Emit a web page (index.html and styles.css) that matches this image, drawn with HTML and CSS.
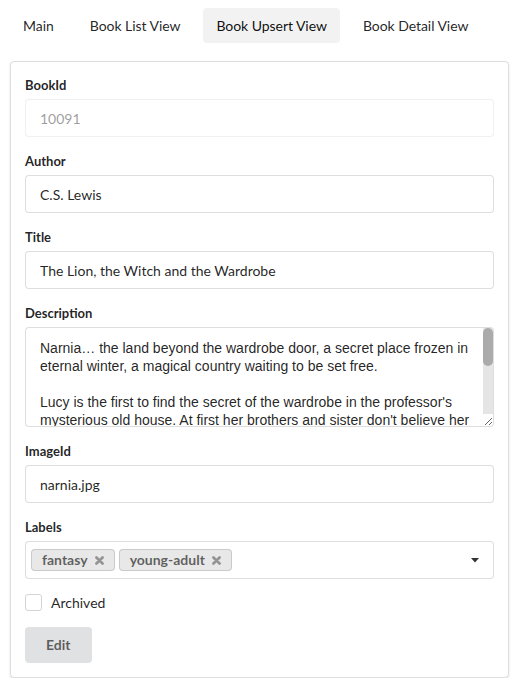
FILE: index.html
```html
<!DOCTYPE html>
<html lang="en">
<head>
<meta charset="utf-8">
<title>Book Upsert View</title>
<link rel="stylesheet" href="styles.css">
</head>
<body>
<div class="page">
  <nav class="menu">
    <a class="item">Main</a>
    <a class="item">Book List View</a>
    <a class="item active">Book Upsert View</a>
    <a class="item">Book Detail View</a>
  </nav>
  <form class="card">
    <div class="field">
      <label>BookId</label>
      <input class="input" type="text" value="10091" disabled>
    </div>
    <div class="field">
      <label>Author</label>
      <input class="input" type="text" value="C.S. Lewis">
    </div>
    <div class="field">
      <label>Title</label>
      <input class="input" type="text" value="The Lion, the Witch and the Wardrobe">
    </div>
    <div class="field">
      <label>Description</label>
      <div class="textarea-wrap">
        <textarea class="textarea">Narnia… the land beyond the wardrobe door, a secret place frozen in eternal winter, a magical country waiting to be set free.

Lucy is the first to find the secret of the wardrobe in the professor's mysterious old house. At first her brothers and sister don't believe her when she tells of her visit to the land of Narnia. But soon Edmund, then Peter and Susan step through the wardrobe themselves. In Narnia they find a country buried under the evil enchantment of the White Witch.</textarea>
        <div class="scrollbar"><div class="thumb"></div></div>
      </div>
    </div>
    <div class="field">
      <label>ImageId</label>
      <input class="input" type="text" value="narnia.jpg">
    </div>
    <div class="field">
      <label>Labels</label>
      <div class="dropdown">
        <span class="tag">fantasy<svg class="del" viewBox="0 0 10 10" width="9" height="9"><path d="M1.6 1.6 L8.4 8.4 M8.4 1.6 L1.6 8.4"/></svg></span>
        <span class="tag">young-adult<svg class="del" viewBox="0 0 10 10" width="9" height="9"><path d="M1.6 1.6 L8.4 8.4 M8.4 1.6 L1.6 8.4"/></svg></span>
        <svg class="caret" viewBox="0 0 8 5" width="8" height="5"><path d="M0 0 H8 L4 4.5 Z"/></svg>
      </div>
    </div>
    <div class="field check-field">
      <span class="checkbox"></span>
      <span class="check-label">Archived</span>
    </div>
    <button class="button" type="button">Edit</button>
  </form>
</div>
</body>
</html>
```
FILE: styles.css
```css
html, body {
  margin: 0;
  padding: 0;
  background: #ffffff;
}
body {
  font-family: Lato, "Helvetica Neue", Arial, sans-serif;
  font-size: 14px;
  line-height: 20px;
  color: rgba(0, 0, 0, 0.87);
}
.page {
  padding: 8px 10px 0 10px;
}
.menu {
  display: flex;
  margin: 0 0 18px -5px;
}
.item {
  display: block;
  padding: 11px 13px 10px 13px;
  margin: 0 5px;
  line-height: 14px;
  border-radius: 4px;
  color: rgba(0, 0, 0, 0.87);
  cursor: pointer;
  letter-spacing: -0.05px;
}
.item.active {
  background: rgba(0, 0, 0, 0.05);
  color: rgba(0, 0, 0, 0.95);
}
.card {
  display: block;
  margin: 0;
  padding: 13px 14px 14px 14px;
  border: 1px solid rgba(34, 36, 38, 0.15);
  border-radius: 4px;
  box-shadow: 0 1px 2px 0 rgba(34, 36, 38, 0.15);
}
.field {
  margin-bottom: 14px;
}
.field > label {
  display: block;
  margin: 0 0 4px 0;
  font-size: 13px;
  font-weight: 700;
  line-height: 20px;
  color: rgba(0, 0, 0, 0.87);
}
.input {
  display: block;
  width: 100%;
  box-sizing: border-box;
  margin: 0;
  padding: 9.5px 14px;
  font-family: Lato, "Helvetica Neue", Arial, sans-serif;
  font-size: 14px;
  line-height: 17px;
  color: rgba(0, 0, 0, 0.87);
  background: #ffffff;
  border: 1px solid rgba(34, 36, 38, 0.15);
  border-radius: 4px;
  outline: none;
}
.input:disabled {
  opacity: 0.45;
}
.textarea-wrap {
  position: relative;
}
.textarea {
  display: block;
  width: 100%;
  height: 100px;
  box-sizing: border-box;
  margin: 0;
  padding: 11px 21px 11px 14px;
  font-family: "Liberation Sans", Arial, sans-serif;
  font-size: 14px;
  line-height: 18px;
  color: rgba(0, 0, 0, 0.87);
  background: #ffffff;
  border: 1px solid rgba(34, 36, 38, 0.15);
  border-radius: 4px;
  outline: none;
  resize: vertical;
  overflow: hidden;
}
.scrollbar {
  position: absolute;
  top: 1px;
  right: 1px;
  width: 10px;
  height: 86px;
  background: rgba(0, 0, 0, 0.1);
  border-top-right-radius: 3px;
}
.thumb {
  width: 10px;
  height: 38px;
  background: rgba(0, 0, 0, 0.25);
  border-radius: 5px;
}
.dropdown {
  position: relative;
  display: flex;
  flex-wrap: wrap;
  align-items: center;
  box-sizing: border-box;
  min-height: 38px;
  padding: 3px 30px 3px 5px;
  border: 1px solid rgba(34, 36, 38, 0.15);
  border-radius: 4px;
  background: #ffffff;
}
.tag {
  display: inline-flex;
  align-items: center;
  margin: 2px 4px 2px 0;
  padding: 4px 11px;
  font-size: 14px;
  font-weight: 700;
  line-height: 14px;
  color: rgba(0, 0, 0, 0.6);
  background: #e8e8e8;
  border-radius: 4px;
  box-shadow: inset 0 0 0 1px rgba(34, 36, 38, 0.15);
}
.del {
  margin-left: 7px;
  fill: none;
  stroke: rgba(0, 0, 0, 0.36);
  stroke-width: 3;
  stroke-linecap: round;
}
.caret {
  position: absolute;
  right: 14px;
  top: 16px;
  fill: rgba(0, 0, 0, 0.8);
}
.check-field {
  display: flex;
  align-items: center;
  height: 20px;
  margin-top: -1px;
  margin-bottom: 15px;
}
.checkbox {
  display: block;
  width: 17px;
  height: 17px;
  box-sizing: border-box;
  border: 1px solid #d4d4d5;
  border-radius: 3px;
  background: #ffffff;
}
.check-label {
  margin-left: 9px;
  line-height: 17px;
  color: rgba(0, 0, 0, 0.87);
}
.button {
  display: block;
  margin: 0;
  padding: 11px 21px;
  font-family: Lato, "Helvetica Neue", Arial, sans-serif;
  font-size: 14px;
  font-weight: 700;
  line-height: 14px;
  color: rgba(0, 0, 0, 0.6);
  background: #e0e1e2;
  border: none;
  border-radius: 4px;
  cursor: pointer;
}
```
